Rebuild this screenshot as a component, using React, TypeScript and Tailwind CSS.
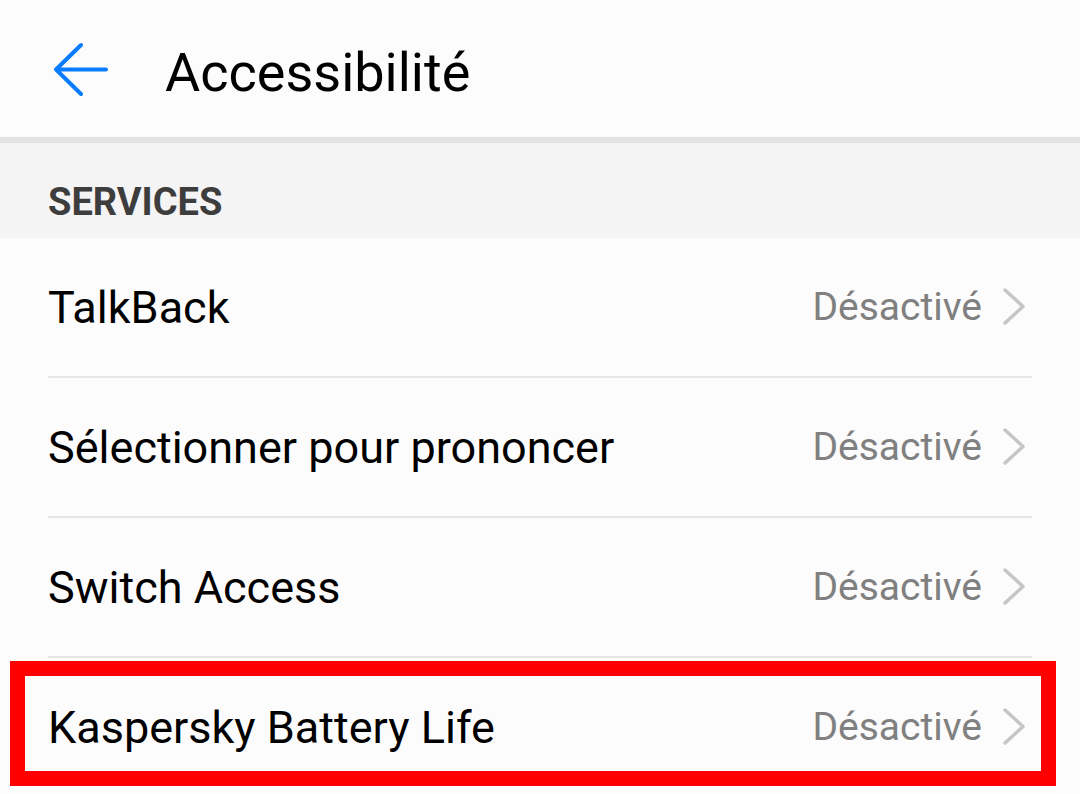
const services = [
  { name: 'TalkBack', status: 'Désactivé' },
  { name: 'Sélectionner pour prononcer', status: 'Désactivé' },
  { name: 'Switch Access', status: 'Désactivé' },
  { name: 'Kaspersky Battery Life', status: 'Désactivé' },
];

function BackArrow() {
  return (
    <svg width="60" height="60" viewBox="0 0 60 60" fill="none" className="mt-[5px]">
      <path
        d="M27 4 L2 28.5 L27 53 M2 28.5 H52"
        stroke="#0a7cff"
        strokeWidth="4"
        strokeLinecap="round"
        strokeLinejoin="round"
      />
    </svg>
  );
}

function Chevron() {
  return (
    <svg width="24" height="40" viewBox="0 0 24 40" fill="none">
      <path
        d="M3 3 L21 19.5 L3 36"
        stroke="#c6c6c6"
        strokeWidth="3.5"
        strokeLinecap="round"
        strokeLinejoin="round"
      />
    </svg>
  );
}

export default function App() {
  return (
    <div className="relative w-[1080px] h-[794px] overflow-hidden bg-[#fcfcfc] font-['Roboto',sans-serif]">
      <header className="h-[137px] flex items-center pl-[54px]">
        <BackArrow />
        <h1 className="ml-[51px] text-[54px] leading-none text-black mt-[8px]">Accessibilité</h1>
      </header>
      <div className="h-[6px] bg-[#e3e3e3]" />
      <div className="h-[95px] bg-[#f4f4f4] flex items-center px-[48px]">
        <span className="text-[38px] font-bold text-[#3d3d3d] leading-none mt-[22px]">SERVICES</span>
      </div>

      <div className="flex flex-col">
        {services.map((s, i) => (
          <div key={s.name}>
            {i > 0 && <div className="h-[2px] bg-[#e6e6e6] ml-[48px] mr-[48px]" />}
            <div className="h-[138px] flex items-center justify-between pl-[48px] pr-[54px]">
              <span className="text-[45px] text-black leading-none">{s.name}</span>
              <div className="flex items-center gap-[20px]">
                <span className="text-[39px] text-[#808080] leading-none">{s.status}</span>
                <Chevron />
              </div>
            </div>
          </div>
        ))}
      </div>

      <div className="absolute left-[10px] top-[661px] w-[1046px] h-[125px] border-[15px] border-[#ff0000]" />
    </div>
  );
}
